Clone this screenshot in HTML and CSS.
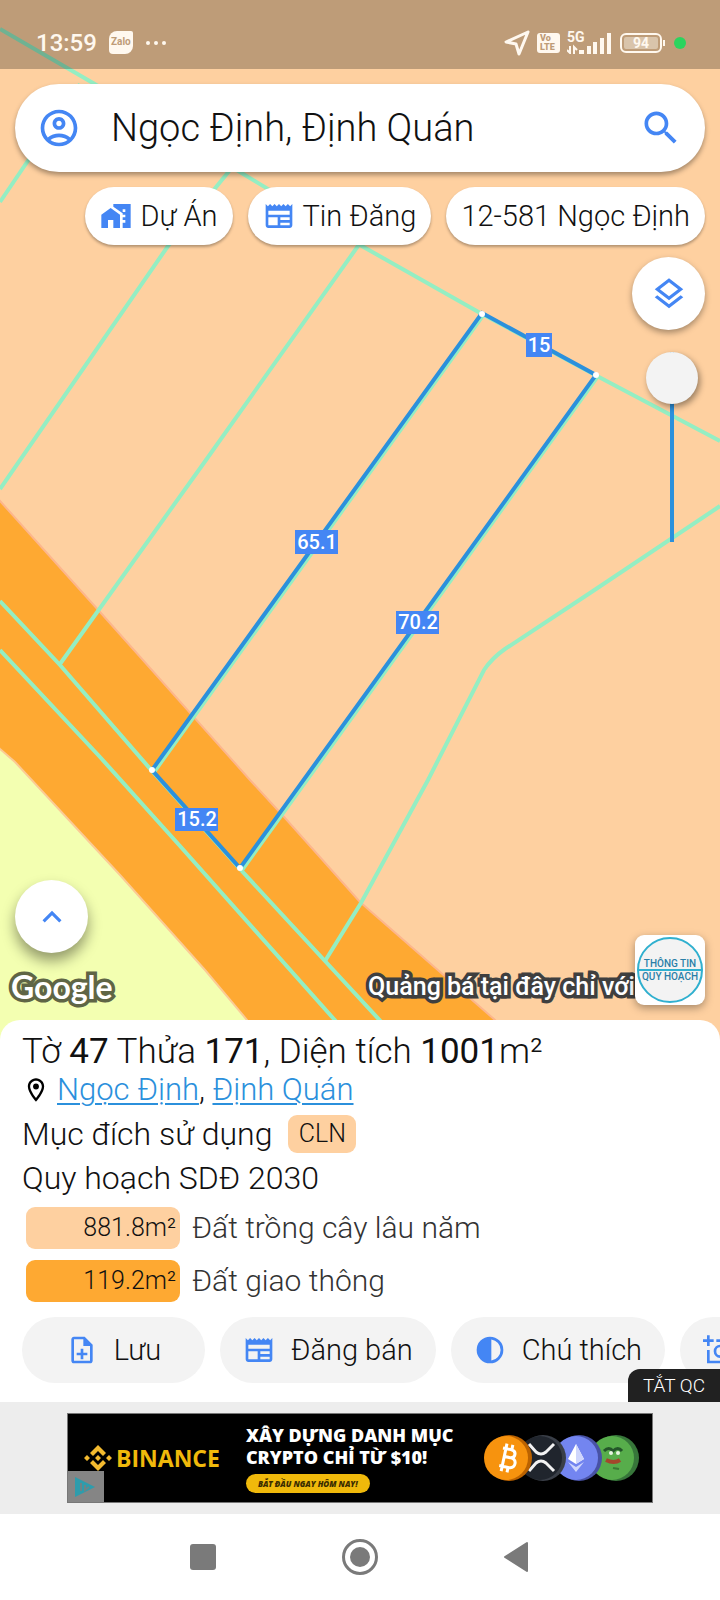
FILE: index.html
```html
<!DOCTYPE html>
<html lang="vi">
<head>
    <meta charset="UTF-8">
    <meta name="viewport" content="width=device-width, initial-scale=1.0">
    <title>Thông tin quy hoạch</title>
    <link rel="stylesheet" href="styles.css">
</head>
<body>
    <main class="map">
        <svg class="map-canvas" viewBox="0 0 720 1040" preserveAspectRatio="xMidYMin slice">
            <!-- land use zones -->
            <rect width="720" height="1040" fill="#fed0a0"/>
            <path d="M-20 479L0 501 100 612 250 780 285 818 360 902 495 1020 520 1050H-20z" fill="#fea932" stroke="#fdb68c" stroke-width="2"/>
            <path d="M-20 730L0 749 15 762 120 875 205 970 247 1020 264 1050H-20z" fill="#f3ffb1" stroke="#fbcb95" stroke-width="2"/>

            <!-- parcel borders -->
            <g class="border">
                <path d="M0 29L93 83 240 172 360 245 482 314 597 376 720 441"/>
                <path d="M0 202L80 84"/>
                <path d="M230 170L168 246 0 489"/>
                <path d="M358 246L206 460 60 664"/>
                <path d="M720 506L590 593 505 649Q492 658 484 670L428 780 361 903 325 961"/>
                <path d="M0 601L60 665 152 771 240 869 325 961 398 1040"/>
                <path d="M0 650L100 757 180 846 333 1018 353 1040"/>
                <path d="M484 314L154 772M598 376L242 870"/>
            </g>

            <!-- selected parcel -->
            <path class="parcel" d="M482 313L596 375 240 868 152 770z"/>
            <g fill="#fff">
                <circle cx="482" cy="314" r="3"/>
                <circle cx="596" cy="375" r="3"/>
                <circle cx="240" cy="868" r="3"/>
                <circle cx="152" cy="770" r="3"/>
            </g>
            <g fill="#4486f4">
                <rect x="526" y="333" width="26" height="24"/>
                <rect x="295" y="530" width="43" height="24"/>
                <rect x="396" y="611" width="43" height="23"/>
                <rect x="175" y="808" width="43" height="23"/>
            </g>
            <g class="edge-text">
                <text x="539" y="352">15</text>
                <text x="317" y="549">65.1</text>
                <text x="418" y="629">70.2</text>
                <text x="197" y="826">15.2</text>
            </g>
        </svg>

        <header class="status-bar">
            <div class="status-left">
                <span class="time">13:59</span>
                <span class="zalo">Zalo</span>
                <svg width="22" height="6" viewBox="0 0 22 6" fill="#fff8ef"><circle cx="3" cy="3" r="2"/><circle cx="11" cy="3" r="2"/><circle cx="19" cy="3" r="2"/></svg>
            </div>
            <div class="status-right">
                <svg width="26" height="26" viewBox="0 0 26 26" fill="none" stroke="#fff8ef" stroke-width="3" stroke-linejoin="round"><path d="M24 2L2 12l10 2 3 10z"/></svg>
                <span class="volte">Vo<br>LTE</span>
                <span class="signal">
                    <span class="net">5G</span>
                    <svg width="44" height="22" viewBox="0 0 44 22" fill="#fff8ef"><path d="M12 18h5v4h-5zM20 14h4v8h-4zM26 10h4v12h-4zM33 6h4v16h-4zM40 1h4v21h-4z"/><path d="M3 14v7L0 18M7 22v-7l3 3" fill="none" stroke="#fff8ef" stroke-width="2"/></svg>
                </span>
                <span class="battery"><span>94</span></span>
                <span class="dot"></span>
            </div>
        </header>

        <form class="search">
            <button type="button" class="icon-btn" aria-label="Tài khoản">
                <svg width="44" height="44" viewBox="0 0 24 24"><path d="M12 2C6.48 2 2 6.48 2 12s4.48 10 10 10 10-4.48 10-10S17.52 2 12 2zM7.35 18.5C8.66 17.56 10.26 17 12 17s3.34.56 4.65 1.5c-1.31.94-2.91 1.5-4.65 1.5s-3.34-.56-4.65-1.5zm10.79-1.38C16.45 15.8 14.32 15 12 15s-4.45.8-6.14 2.12C4.7 15.73 4 13.95 4 12c0-4.42 3.58-8 8-8s8 3.58 8 8c0 1.95-.7 3.73-1.86 5.12zM12 6c-1.93 0-3.5 1.57-3.5 3.5S10.07 13 12 13s3.5-1.57 3.5-3.5S13.93 6 12 6zm0 5c-.83 0-1.5-.67-1.5-1.5S11.17 8 12 8s1.5.67 1.5 1.5S12.83 11 12 11z"/></svg>
            </button>
            <input type="text" value="Ngọc Định, Định Quán" aria-label="Tìm kiếm">
            <button type="button" class="icon-btn" aria-label="Tìm">
                <svg width="44" height="44" viewBox="0 0 24 24"><path d="M15.5 14h-.79l-.28-.27C15.41 12.59 16 11.11 16 9.5 16 5.91 13.09 3 9.5 3S3 5.91 3 9.5 5.91 16 9.5 16c1.61 0 3.09-.59 4.23-1.57l.27.28v.79l5 4.99L20.49 19l-4.99-5zm-6 0C7.01 14 5 11.99 5 9.5S7.01 5 9.5 5 14 7.01 14 9.5 11.99 14 9.5 14z"/></svg>
            </button>
        </form>

        <div class="chips">
            <button class="chip">
                <svg width="32" height="32" viewBox="0 0 24 24"><path d="M1 11v10h5v-6h4v6h5V11L8 6z"/><path d="M10 3v1.97l7 5V11h2v2h-2v2h2v2h-2v4h6V3H10zm9 6h-2V7h2v2z"/></svg>
                Dự Án
            </button>
            <button class="chip">
                <svg width="32" height="32" viewBox="0 0 24 24"><path d="M22 3l-1.67 1.67L18.67 3 17 4.67 15.33 3l-1.66 1.67L12 3l-1.67 1.67L8.67 3 7 4.67 5.33 3 3.67 4.67 2 3v16c0 1.1.9 2 2 2h16c1.1 0 2-.9 2-2V3zM11 19H4v-6h7v6zm9 0h-7v-2h7v2zm0-4h-7v-2h7v2zm0-4H4V8h16v3z"/></svg>
                Tin Đăng
            </button>
            <button class="chip">12-581 Ngọc Định</button>
        </div>

        <div class="tools">
            <button class="round-btn" aria-label="Lớp bản đồ">
                <svg width="38" height="38" viewBox="0 0 24 24"><path d="M11.99 18.54l-7.37-5.73L3 14.07l9 7 9-7-1.63-1.27zM12 16l7.36-5.73L21 9l-9-7-9 7 1.63 1.27L12 16zm0-11.47L17.74 9 12 13.47 6.26 9 12 4.53z"/></svg>
            </button>
            <input class="opacity" type="range" min="0" max="100" value="100" aria-label="Độ mờ">
        </div>

        <div class="map-bottom">
            <button class="round-btn up" aria-label="Mở rộng">
                <svg width="38" height="38" viewBox="0 0 24 24"><path d="M12 8l-6 6 1.41 1.41L12 10.83l4.59 4.58L18 14z"/></svg>
            </button>
            <div class="map-foot">
                <span class="google">Google</span>
                <span class="promo">Quảng bá tại đây chỉ với</span>
                <div class="badge">
                    <div class="badge-ring"><span>THÔNG TIN</span><span>QUY HOẠCH</span></div>
                </div>
            </div>
        </div>
    </main>

    <section class="panel">
        <h1>Tờ <b>47</b> Thửa <b>171</b>, Diện tích <b>1001</b>m²</h1>
        <p class="address">
            <svg width="28" height="28" viewBox="0 0 24 24"><path d="M12 2C8.13 2 5 5.13 5 9c0 5.25 7 13 7 13s7-7.75 7-13c0-3.87-3.13-7-7-7zM7 9c0-2.76 2.24-5 5-5s5 2.24 5 5c0 2.88-2.88 7.19-5 9.88C9.92 16.21 7 11.85 7 9z"/><circle cx="12" cy="9" r="2.5"/></svg>
            <span><a href="#">Ngọc Định</a>, <a href="#">Định Quán</a></span>
        </p>
        <p class="purpose">Mục đích sử dụng <span class="tag">CLN</span></p>
        <p class="plan">Quy hoạch SDĐ 2030</p>
        <ul class="uses">
            <li><span class="area">881.8m²</span>Đất trồng cây lâu năm</li>
            <li><span class="area road">119.2m²</span>Đất giao thông</li>
        </ul>
        <div class="actions">
            <button class="action save">
                <svg width="32" height="32" viewBox="0 0 24 24"><path d="M14 2H6c-1.100 0-1.990.9-1.990 2L4 20c0 1.100.89 2 1.990 2H18c1.100 0 2-.9 2-2V8l-6-6zm4 18H6V4h7v5h5v11zM11 11v3H8v2h3v3h2v-3h3v-2h-3v-3z"/></svg>
                Lưu
            </button>
            <button class="action">
                <svg width="32" height="32" viewBox="0 0 24 24"><path d="M22 3l-1.67 1.67L18.67 3 17 4.67 15.33 3l-1.66 1.67L12 3l-1.67 1.67L8.67 3 7 4.67 5.33 3 3.67 4.67 2 3v16c0 1.1.9 2 2 2h16c1.1 0 2-.9 2-2V3zM11 19H4v-6h7v6zm9 0h-7v-2h7v2zm0-4h-7v-2h7v2zm0-4H4V8h16v3z"/></svg>
                Đăng bán
            </button>
            <button class="action">
                <svg width="32" height="32" viewBox="0 0 24 24"><path d="M12 2a10 10 0 1 0 0 20 10 10 0 1 0 0-20zM13 4.070a8 8 0 0 1 0 15.860z"/></svg>
                Chú thích
            </button>
            <button class="action" aria-label="Chụp ảnh">
                <svg width="32" height="32" viewBox="0 0 24 24" class="lines"><path d="M0 5h8M4 1v8M10 5h4M16 5h6v16H4V12"/><circle cx="13" cy="13" r="4"/></svg>
            </button>
        </div>
        <button class="ad-off">TẮT QC</button>
    </section>

    <aside class="ad">
        <a class="banner" href="#">
            <span class="brand">
                <svg width="28" height="28" viewBox="0 0 28 28" fill="#f3ba2f"><path d="M14 1l8 8-3 3-5-5-5 5-3-3zM14 27l8-8-3-3-5 5-5-5-3 3zM14 11l3 3-3 3-3-3zM3 11l3 3-3 3-3-3zM25 11l3 3-3 3-3-3z"/></svg>
                BINANCE
            </span>
            <span class="copy">
                <span>XÂY DỰNG DANH MỤC</span>
                <span>CRYPTO CHỈ TỪ $10!</span>
                <span class="cta">BẮT ĐẦU NGAY HÔM NAY!</span>
            </span>
            <svg class="coins" width="156" height="50" viewBox="0 0 156 50">
                <circle cx="132" cy="25" r="23" fill="#37763a"/><circle cx="128" cy="25" r="22" fill="#57ad4b"/>
                <path d="M120 18q5-5 9 0 5-5 9 0" fill="none" stroke="#24562a" stroke-width="3"/><circle cx="127" cy="20" r="2" fill="#e8f4e2"/><circle cx="134" cy="20" r="2" fill="#e8f4e2"/><path d="M122 27q8 4 14 0" fill="none" stroke="#a3472c" stroke-width="4"/><path d="M129 35l6 1" stroke="#397a35" stroke-width="2"/>
                <circle cx="95" cy="25" r="23" fill="#4852a5"/><circle cx="92" cy="25" r="22" fill="#7385f0"/>
                <path d="M92 11l8 15-8 5-8-5z" fill="#fff"/><path d="M92 11l8 15-8 5zM84 29l8 5 8-5-8 10z" fill="#cfd6fc"/>
                <circle cx="59" cy="25" r="23" fill="#3a3f48"/><circle cx="56" cy="25" r="22" fill="#20252d"/>
                <path d="M45 11l7 8q5 4 10 0l8-8M45 38l7-8q5-4 10 0l8 8" fill="none" stroke="#f2f2f2" stroke-width="3"/>
                <circle cx="25" cy="25" r="23" fill="#bb6200"/><circle cx="22" cy="25" r="22" fill="#f7930e"/>
                <g transform="rotate(12 23 25)" fill="none" stroke="#fff" stroke-width="3"><path d="M17 16h8q5 0 5 4t-5 4h-6 7q6 0 6 5t-6 5h-9M20 15v19M20 11v4M26 11v4M20 34v5M26 34v5"/></g>
            </svg>
            <span class="choices"><svg width="24" height="24" viewBox="0 0 24 24"><path d="M2 2l20 10L2 22z" fill="#2e9cac"/><path d="M8 8v8M12 10v5l4-3" stroke="#6c8487" stroke-width="2" fill="none"/></svg></span>
        </a>
    </aside>

    <nav class="nav">
        <button aria-label="Gần đây"><svg width="36" height="36" viewBox="0 0 36 36"><rect x="5" y="5" width="26" height="26" rx="3"/></svg></button>
        <button aria-label="Trang chủ"><svg width="36" height="36" viewBox="0 0 36 36"><circle cx="18" cy="18" r="16.500" fill="none" stroke="#7a7a7a" stroke-width="3"/><circle cx="18" cy="18" r="10"/></svg></button>
        <button aria-label="Quay lại"><svg width="36" height="36" viewBox="0 0 36 36"><path d="M6 18L28 4v28z" stroke="#7a7a7a" stroke-width="2" stroke-linejoin="round"/></svg></button>
    </nav>
</body>
</html>
```

FILE: styles.css
```css
* {
    box-sizing: border-box;
}

body {
    margin: 0;
    min-height: 100vh;
    display: flex;
    flex-direction: column;
    font-family: Roboto, "Noto Sans", sans-serif;
    font-weight: 300;
    color: #111;
    background-color: #fff;
}

button,
input {
    font: inherit;
    color: inherit;
    border: none;
    padding: 0;
    background: none;
}

button {
    cursor: pointer;
}

svg {
    display: block;
    flex-shrink: 0;
}

h1,
p,
ul {
    margin: 0;
    padding: 0;
    list-style: none;
}

/* map */
.map {
    position: relative;
    flex: 1;
    display: flex;
    flex-direction: column;
    margin-bottom: -20px;
    overflow: hidden;
}

.map-canvas {
    position: absolute;
    inset: 0;
    width: 100%;
    height: 100%;
}

.map > :not(.map-canvas) {
    position: relative;
}

.border {
    fill: none;
    stroke: #94eec3;
    stroke-width: 4;
}

.parcel {
    fill: none;
    stroke: #2b90dc;
    stroke-width: 4;
}

.edge-text {
    fill: #fff;
    font-size: 20px;
    font-weight: 500;
    text-anchor: middle;
}

.status-bar {
    height: 69px;
    padding: 16px 34px 0 36px;
    display: flex;
    align-items: center;
    justify-content: space-between;
    background-color: rgba(0, 0, 0, 0.25);
    color: #fff8ef;
}

.status-left,
.status-right {
    display: flex;
    align-items: center;
}

.status-left {
    gap: 12px;
}

.status-right {
    gap: 7px;
}

.time {
    font-size: 24px;
    font-weight: 500;
}

.zalo {
    width: 24px;
    height: 23px;
    border-radius: 8px 2px 8px 4px;
    background-color: #fff8ef;
    color: #be9c78;
    font-size: 10px;
    font-weight: 700;
    line-height: 22px;
    text-align: center;
}

.volte {
    width: 23px;
    height: 20px;
    border-radius: 3px;
    background-color: #fff8ef;
    color: #be9c78;
    font-size: 9px;
    font-weight: 900;
    line-height: 9px;
    padding: 1px 3px;
}

.signal {
    position: relative;
}

.net {
    position: absolute;
    left: 0;
    top: -2px;
    font-size: 14px;
    font-weight: 700;
    line-height: 14px;
}

.battery {
    position: relative;
    width: 42px;
    height: 20px;
    margin: 0 5px 0 2px;
    padding: 2px;
    border: 2px solid #fff8ef;
    border-radius: 6px;
}

.battery span {
    display: block;
    height: 12px;
    border-radius: 2px;
    background-color: #d9c4ab;
    font-size: 14px;
    font-weight: 700;
    line-height: 13px;
    text-align: center;
}

.battery::after {
    content: "";
    position: absolute;
    right: -5px;
    top: 5px;
    width: 2px;
    height: 6px;
    background-color: #fff8ef;
}

.dot {
    width: 12px;
    height: 12px;
    border-radius: 50%;
    background-color: #2bd45e;
}

.search {
    height: 88px;
    margin: 15px 15px 0;
    padding: 0 22px;
    display: flex;
    align-items: center;
    gap: 30px;
    border-radius: 44px;
    background-color: #fff;
    box-shadow: 0 3px 5px rgba(0, 0, 0, 0.35);
}

.search input {
    flex: 1;
    min-width: 0;
    font-size: 38px;
    outline: none;
}

.search svg,
.chip svg,
.round-btn svg,
.action svg {
    fill: #4486f4;
}

.chips {
    display: flex;
    justify-content: flex-end;
    gap: 15px;
    margin: 15px 15px 0;
}

.chip {
    height: 58px;
    padding: 0 15px;
    display: flex;
    align-items: center;
    gap: 8px;
    border-radius: 29px;
    background-color: #fff;
    box-shadow: 0 2px 3px rgba(0, 0, 0, 0.3);
    font-size: 29px;
    white-space: nowrap;
}

.tools {
    display: flex;
    flex-direction: column;
    align-items: flex-end;
    gap: 22px;
    margin: 12px 15px 0;
}

.round-btn {
    width: 73px;
    height: 73px;
    display: flex;
    align-items: center;
    justify-content: center;
    border-radius: 50%;
    background-color: #fff;
    box-shadow: 0 3px 6px rgba(0, 0, 0, 0.35);
}

.opacity {
    appearance: none;
    writing-mode: vertical-lr;
    direction: rtl;
    width: 52px;
    height: 190px;
    margin: 0 7px 0 0;
    background: linear-gradient(#2b90dc, #2b90dc) center / 4px 100% no-repeat;
}

.opacity::-webkit-slider-thumb {
    appearance: none;
    width: 52px;
    height: 52px;
    border-radius: 50%;
    background-color: #f3f3f3;
    box-shadow: 2px 3px 6px rgba(0, 0, 0, 0.4);
}

.map-bottom {
    margin-top: auto;
    padding: 0 15px 35px;
}

.up {
    margin-bottom: -18px;
    box-shadow: 0 8px 14px rgba(0, 0, 0, 0.4);
}

.map-foot {
    display: flex;
    align-items: flex-end;
    color: #fff;
}

.google,
.promo {
    paint-order: stroke;
    white-space: nowrap;
}

.google {
    margin-left: -4px;
    font-family: Lato, sans-serif;
    font-size: 32px;
    font-weight: 700;
    line-height: 36px;
    -webkit-text-stroke: 7px #5f6545;
}

.promo {
    margin-left: auto;
    font-size: 25px;
    font-weight: 500;
    line-height: 36px;
    -webkit-text-stroke: 7px #3f3f3f;
}

.badge {
    position: relative;
    width: 70px;
    height: 70px;
    padding: 2px;
    border-radius: 9px;
    background-color: #fff;
    box-shadow: 0 3px 8px rgba(0, 0, 0, 0.35);
}

.badge-ring {
    height: 66px;
    display: flex;
    flex-direction: column;
    justify-content: center;
    border: 2px solid #30b0cf;
    border-radius: 50%;
    background: linear-gradient(#30b0cf, #30b0cf) center / 100% 2px no-repeat #f3f3f3;
    color: #2a7fa8;
    font-size: 10px;
    font-weight: 500;
    line-height: 13px;
    text-align: center;
    white-space: nowrap;
}

.badge-ring span {
    margin: 0 -4px;
}

/* parcel details */
.panel {
    position: relative;
    padding: 12px 0 19px 22px;
    border-radius: 20px 20px 0 0;
    background-color: #fff;
    font-size: 32px;
    overflow: hidden;
}

h1 {
    font-size: 35px;
    font-weight: 300;
    line-height: 40px;
}

h1 b {
    font-weight: 400;
}

.address {
    display: flex;
    align-items: center;
    gap: 7px;
    font-size: 31px;
    line-height: 36px;
}

.address a {
    color: #2b90dc;
    text-decoration-thickness: 2px;
    text-underline-offset: 3px;
}

.purpose {
    display: flex;
    align-items: center;
    gap: 16px;
    margin-top: 4px;
    line-height: 44px;
}

.tag {
    width: 68px;
    height: 38px;
    border-radius: 9px;
    background-color: #fed0a0;
    font-size: 25px;
    line-height: 38px;
    text-align: center;
}

.plan {
    line-height: 44px;
}

.uses {
    display: flex;
    flex-direction: column;
    gap: 11px;
    margin: 7px 4px 0;
    font-size: 30px;
}

.uses li {
    display: flex;
    align-items: center;
    gap: 12px;
    color: #333;
    line-height: 42px;
}

.area {
    width: 154px;
    padding-right: 4px;
    border-radius: 9px;
    background-color: #fed0a0;
    color: #111;
    font-size: 25px;
    text-align: right;
}

.road {
    background-color: #fea932;
}

.actions {
    display: flex;
    gap: 15px;
    margin-top: 15px;
    overflow: hidden;
}

.action {
    flex-shrink: 0;
    height: 66px;
    padding: 0 23px;
    display: flex;
    align-items: center;
    justify-content: center;
    gap: 16px;
    border-radius: 33px;
    background-color: #f3f3f3;
    font-size: 29px;
}

.save {
    width: 183px;
}

.action .lines {
    fill: none;
    stroke: #4486f4;
    stroke-width: 2;
}

.ad-off {
    position: absolute;
    right: 0;
    bottom: 0;
    height: 33px;
    padding: 0 15px;
    border-radius: 12px 0 0 0;
    background-color: #212121;
    color: #fff;
    font-size: 19px;
}

/* advert */
.ad {
    padding: 11px 67px;
    background-color: #ededed;
}

.banner {
    position: relative;
    height: 90px;
    padding: 0 12px 0 16px;
    display: flex;
    align-items: center;
    border: 1px solid #777;
    background-color: #000;
    color: #fff;
    text-decoration: none;
}

.brand {
    display: flex;
    align-items: center;
    gap: 4px;
    color: #f0b90b;
    font-family: "Open Sans", sans-serif;
    font-size: 23px;
    font-weight: 700;
}

.copy {
    display: flex;
    flex-direction: column;
    align-items: flex-start;
    margin-left: 26px;
    font-family: "Open Sans", sans-serif;
    font-size: 18px;
    font-weight: 800;
    line-height: 22px;
    white-space: nowrap;
}

.cta {
    height: 19px;
    margin-top: 6px;
    padding: 0 12px;
    border-radius: 10px;
    background-color: #f0b90b;
    color: #3b2c00;
    font-size: 8px;
    font-style: italic;
    line-height: 19px;
}

.coins {
    margin-left: auto;
}

.choices {
    position: absolute;
    left: 0;
    bottom: 0;
    width: 36px;
    height: 31px;
    padding: 4px 5px;
    background-color: #858585;
}

/* system navigation */
.nav {
    height: 86px;
    padding: 0 125px;
    display: flex;
    align-items: center;
    justify-content: space-around;
}

.nav svg {
    fill: #7a7a7a;
}
```
